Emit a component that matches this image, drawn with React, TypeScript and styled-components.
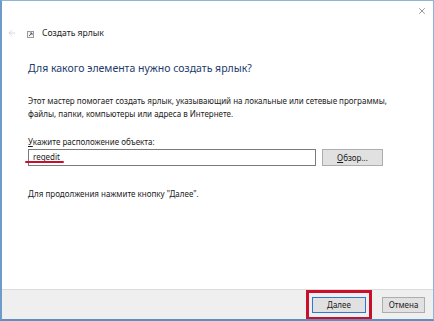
import React from "react";
import styled, { createGlobalStyle } from "styled-components";
import { ArrowLeft, X } from "lucide-react";

const GlobalStyle = createGlobalStyle`
  html, body {
    margin: 0;
    padding: 0;
    background: #ffffff;
  }
  body {
    font-family: "Noto Sans", "Open Sans", Arial, sans-serif;
    color: #1b1b1b;
  }
`;

const Window = styled.div`
  display: flex;
  flex-direction: column;
  width: 434px;
  height: 321px;
  box-sizing: border-box;
  border: 1px solid #8fb3d6;
  border-left: 2px solid #6d9ac6;
  border-bottom: 2px solid #5f8fbf;
  background: #ffffff;
  overflow: hidden;
`;

const TopBar = styled.div`
  display: flex;
  justify-content: flex-end;
  height: 22px;
  padding: 5px 6px 0 0;
  box-sizing: border-box;
  color: #333;
`;

const NavRow = styled.div`
  display: flex;
  align-items: center;
  height: 20px;
  padding-left: 5px;
`;

const BackButton = styled.span`
  display: flex;
  width: 12px;
  color: #c2c2c2;
`;

const ShortcutIcon = styled.span`
  display: flex;
  margin: 2px 8px 0 8px;
`;

const WindowTitle = styled.span`
  font-size: 8.6px;
  color: #1b1b1b;
`;

const Content = styled.div`
  display: flex;
  flex-direction: column;
  flex: 1;
  padding: 0 0 0 26px;
`;

const Heading = styled.h1`
  margin: 17px 0 0 0;
  font-size: 10.5px;
  font-weight: 400;
  line-height: 16px;
  color: #1d3b6b;
`;

const Paragraph = styled.p<{ $top: number }>`
  margin: ${(p) => p.$top}px 0 0 0;
  font-size: 8px;
  line-height: 13px;
  color: #1b1b1b;
`;

const FieldLabel = styled.label`
  display: block;
  margin-top: 15px;
  font-size: 8px;
  line-height: 13px;
`;

const AccessKey = styled.span`
  text-decoration: underline;
`;

const FieldRow = styled.div`
  display: flex;
  align-items: center;
  gap: 6px;
  margin-top: 1px;
`;

const InputWrap = styled.div`
  position: relative;
  display: flex;
`;

const PathInput = styled.div`
  width: 288px;
  height: 17px;
  box-sizing: border-box;
  border: 1px solid #7a7a7a;
  padding: 0 4px;
  font-size: 8px;
  line-height: 14px;
  background: #fff;
`;

const RedMark = styled.span`
  position: absolute;
  left: -3px;
  top: 12px;
  width: 39px;
  height: 2px;
  border-radius: 1px;
  background: #c8102e;
`;

const Button = styled.button<{ $default?: boolean }>`
  height: ${(p) => (p.$default ? 16 : 17)}px;
  width: ${(p) => (p.$default ? 54 : 61)}px;
  padding: 0;
  box-sizing: border-box;
  border: 1px solid ${(p) => (p.$default ? "#2a7bd0" : "#adadad")};
  background: #e1e1e1;
  font-family: "Noto Sans", "Open Sans", Arial, sans-serif;
  font-size: 8px;
  color: #1b1b1b;
`;

const Footer = styled.div`
  display: flex;
  align-items: center;
  justify-content: flex-end;
  height: 29px;
  border-top: 1px solid #dcdcdc;
  background: #efefef;
  padding-right: 8px;
`;

const Highlight = styled.div`
  display: flex;
  align-items: center;
  justify-content: center;
  width: 66px;
  height: 30px;
  box-sizing: border-box;
  border: 3px solid #c8102e;
  margin-right: 10px;
`;

const CancelButton = styled(Button)`
  width: 43px;
  height: 16px;
`;

const LinkGlyph = () => (
  <svg width="7" height="7" viewBox="0 0 7 7">
    <rect x="0.5" y="0.5" width="6" height="6" fill="#f4f4f4" stroke="#9a9a9a" />
    <path d="M2 5 L5 2 M3 2 H5 V4" stroke="#555" strokeWidth="0.9" fill="none" />
  </svg>
);

export default function App() {
  return (
    <>
      <GlobalStyle />
      <Window>
        <TopBar>
          <X size={10} strokeWidth={1.2} />
        </TopBar>
        <NavRow>
          <BackButton>
            <ArrowLeft size={10} strokeWidth={1.4} />
          </BackButton>
          <ShortcutIcon>
            <LinkGlyph />
          </ShortcutIcon>
          <WindowTitle>Создать ярлык</WindowTitle>
        </NavRow>
        <Content>
          <Heading>Для какого элемента нужно создать ярлык?</Heading>
          <Paragraph $top={18}>
            Этот мастер помогает создать ярлык, указывающий на локальные или сетевые программы,
            <br />
            файлы, папки, компьютеры или адреса в Интернете.
          </Paragraph>
          <FieldLabel>
            <AccessKey>У</AccessKey>кажите расположение объекта:
          </FieldLabel>
          <FieldRow>
            <InputWrap>
              <PathInput>regedit</PathInput>
              <RedMark />
            </InputWrap>
            <Button>
              <AccessKey>О</AccessKey>бзор...
            </Button>
          </FieldRow>
          <Paragraph $top={21}>Для продолжения нажмите кнопку "Далее".</Paragraph>
        </Content>
        <Footer>
          <Highlight>
            <Button $default>Далее</Button>
          </Highlight>
          <CancelButton>Отмена</CancelButton>
        </Footer>
      </Window>
    </>
  );
}
